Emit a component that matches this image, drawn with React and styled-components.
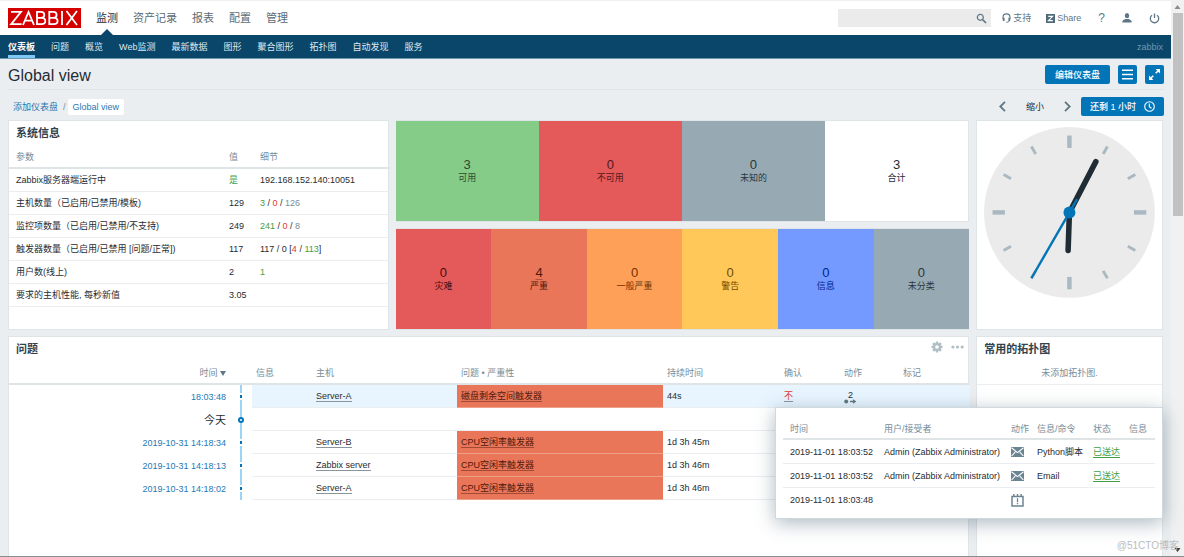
import React from "react";
import styled, { createGlobalStyle, css } from "styled-components";

const Global = createGlobalStyle`
  *, *::before, *::after { box-sizing: border-box; }
  body {
    margin: 0;
    background: #ebeef0;
    color: #1f2c33;
    font: 9px/12px "Liberation Sans", "Noto Sans CJK SC", sans-serif;
  }
  button, input { font: inherit; color: inherit; }
  h1, h2, ul { margin: 0; padding: 0; }
  ul { list-style: none; }
  a { color: inherit; text-decoration: none; }
  svg { display: block; flex: none; }
`;

const Shell = styled.div`
  display: flex;
  min-height: 100vh;
  border-bottom: 1px solid #8a8c8e;
`;

const Page = styled.div`
  flex: 1;
  min-width: 0;
  display: flex;
  flex-direction: column;
`;

const ScrollTrack = styled.div`
  width: 13px;
  background: #f1f1f1;
  display: flex;
  flex-direction: column;
  align-items: center;
  padding: 5px 1px 4px;
`;

const ScrollThumb = styled.div`
  width: 10px;
  height: 203px;
  margin-top: 4px;
  margin-bottom: auto;
  background: #c1c1c1;
`;

const TopBar = styled.header`
  display: flex;
  align-items: center;
  height: 35px;
  padding: 0 7px 0 8px;
  background: #fff;
  border-top: 1px solid #f0f0f0;
`;

const Logo = styled.a`
  display: flex;
  margin-right: 15px;
`;

const MainMenu = styled.ul`
  display: flex;
  gap: 15px;
  align-self: stretch;
  font-size: 11px;
  line-height: 34px;
  color: #5b6b75;
`;

const MainItem = styled.li`
  display: flex;
  flex-direction: column;
  align-items: center;
  ${(p) =>
    p.$active &&
    css`
      color: #1f2c33;
      &::after {
        content: "";
        margin-top: -6px;
        border: 6px solid transparent;
        border-top: 0;
        border-bottom-color: #0a466a;
      }
    `}
`;

const Tools = styled.div`
  display: flex;
  align-items: center;
  margin-left: auto;
  color: #5f7785;
`;

const SearchBox = styled.form`
  display: flex;
  align-items: center;
  width: 153px;
  height: 18px;
  margin-right: 11px;
  background: #ebebeb;
`;

const SearchInput = styled.input`
  flex: 1;
  min-width: 0;
  border: 0;
  padding: 0 6px;
  background: none;
  outline: none;
`;

const PlainButton = styled.button`
  display: flex;
  align-items: center;
  justify-content: center;
  border: 0;
  padding: 0 4px;
  background: none;
  cursor: pointer;
`;

const ToolLink = styled.a`
  display: flex;
  align-items: center;
  gap: 2px;
  margin-right: ${(p) => p.$gap || 15}px;
`;

const HelpMark = styled.span`
  font-size: 12px;
`;

const SubBar = styled.nav`
  display: flex;
  justify-content: space-between;
  align-items: stretch;
  height: 24px;
  padding: 0 8px;
  background: #0a466a;
  border-bottom: 1px solid #6f97b0;
  line-height: 24px;
  color: #6f97b0;
`;

const SubMenu = styled.ul`
  display: flex;
  gap: 16px;
  color: #dfe9ef;
`;

const SubItem = styled.li`
  ${(p) =>
    p.$active &&
    css`
      color: #fff;
      font-weight: 700;
      border-bottom: 3px solid #7dc8f5;
    `}
`;

const TitleRow = styled.div`
  display: flex;
  align-items: center;
  gap: 8px;
  height: 31px;
  margin: 0 7px 0 8px;
  padding-top: 1px;
  border-bottom: 1px solid #dfe4e7;
`;

const Title = styled.h1`
  margin-right: auto;
  padding-top: 2px;
  font-size: 16px;
  line-height: 20px;
  font-weight: 400;
`;

const BlueButton = styled.button`
  display: flex;
  align-items: center;
  justify-content: center;
  gap: 8px;
  height: 19px;
  min-width: 19px;
  padding: 0 ${(p) => p.$pad || 0}px;
  border: 0;
  border-radius: 2px;
  background: #0275b8;
  color: #fff;
  font-weight: 500;
  cursor: pointer;
`;

const FilterRow = styled.div`
  display: flex;
  align-items: center;
  height: 30px;
  padding: 3px 7px 0 13px;
`;

const Crumbs = styled.div`
  display: flex;
  align-items: center;
  gap: 5px;
  margin-right: auto;
  color: #1f78b4;
`;

const Slash = styled.span`
  color: #768d99;
`;

const CurrentCrumb = styled.a`
  margin-left: -3px;
  padding: 2px 5px;
  background: #fff;
  border-radius: 2px;
`;

const Period = styled.div`
  display: flex;
  align-items: center;
  gap: 12px;
  margin-right: 6px;
`;

const Dashboard = styled.main`
  position: relative;
  flex: 1;
  display: grid;
  grid-template-columns: 381fr 574fr 187fr;
  grid-template-rows: auto 1fr;
  gap: 6px 7px;
  margin: 0 8px;
`;

const Panel = styled.section`
  min-width: 0;
  min-height: 210px;
  background: #fff;
  border: 1px solid #dfe4e7;
  ${(p) => p.$wide && "grid-column: span 2;"}
  ${(p) => p.$open && "border-bottom: 0;"}
`;

const PanelHead = styled.div`
  display: flex;
  align-items: center;
  gap: 8px;
  height: 26px;
  padding: 0 4px 2px 7px;
`;

const PanelTitle = styled.h2`
  margin-right: auto;
  font-size: 11px;
  line-height: 16px;
  font-weight: 700;
  color: #31424c;
`;

const PanelTools = styled.div`
  display: flex;
  gap: 8px;
  height: 20px;
  align-self: flex-start;
  color: #b0bec5;
`;

const ToolButton = styled(PlainButton)`
  padding: 0;
`;

const Table = styled.table`
  width: 100%;
  table-layout: fixed;
  border-collapse: separate;
  border-spacing: 0;
  th, td {
    height: 23px;
    padding: 0 4px;
    text-align: left;
    white-space: nowrap;
    font-weight: 400;
    border-bottom: 1px solid #ebeef0;
  }
  th {
    height: 22px;
    color: #768d99;
    border-bottom: 2px solid #dfe4e7;
  }
`;

const SystemTable = styled(Table)`
  th:first-child, td:first-child { padding-left: 7px; }
`;

const ProblemTable = styled(Table)`
  th:first-child, td:first-child { text-align: right; }
  td:nth-child(-n + 2) { border-bottom: 0; }
`;

const ActionTable = styled(Table)`
  th { height: 21px; }
  td { height: 24px; }
  th:first-child, td:first-child { padding-left: 7px; }
  tr:last-child td { border-bottom: 0; }
`;

const ProblemRow = styled.tr`
  td:nth-child(n + 3) { background: ${(p) => (p.$hover ? "#e8f5ff" : "none")}; }
`;

const TimeCell = styled.td`
  color: #1f78b4;
`;

const DayCell = styled.td`
  font-size: 11px;
`;

const LineCell = styled.td`
  background: linear-gradient(#9bd4f5, #9bd4f5) center / 2px 100% no-repeat;
`;

const Dot = styled.span`
  display: block;
  width: 6px;
  height: 7px;
  margin: 0 auto;
  border: 2px solid #fff;
  background: #0275b8;
`;

const DayDot = styled.span`
  display: block;
  width: 6px;
  height: 6px;
  margin: 0 auto;
  border: 2px solid #0275b8;
  border-radius: 50%;
  background: #fff;
`;

const Severity = styled.td`
  &&& {
    background: #e97659;
    border-bottom-color: #efa08b;
    color: #52190b;
  }
`;

const Underlined = styled.a`
  border-bottom: 1px solid ${(p) => p.$line || "#8a969d"};
  color: ${(p) => p.$color || "inherit"};
`;

const Tone = styled.span`
  color: ${(p) => ({ green: "#429e47", red: "#e33734", grey: "#768d99" })[p.$tone]};
`;

const ActionButton = styled(PlainButton)`
  flex-direction: column;
  padding: 2px 0 0;
  line-height: 8px;
`;

const Middle = styled.div`
  display: grid;
  grid-template-rows: 1fr 1fr;
  gap: 6px;
`;

const Tiles = styled.section`
  display: flex;
  min-height: 102px;
  border: solid #dfe4e7;
  border-width: 1px ${(p) => (p.$edge ? 1 : 0)}px 1px 0;
  background: #fff;
`;

const Tile = styled.div`
  flex: 1;
  display: flex;
  flex-direction: column;
  align-items: center;
  justify-content: center;
  background: ${(p) => p.$bg};
  color: ${(p) => p.$fg};
`;

const Count = styled.span`
  font-size: 13px;
  line-height: 14px;
  ${(p) => p.$link && "text-decoration: underline 1px #b0503a; text-underline-offset: 2px;"}
`;

const ClockBox = styled.div`
  padding: 6px 7px;
  svg { width: 100%; height: auto; }
`;

const Empty = styled.p`
  margin: 0;
  height: 22px;
  line-height: 21px;
  text-align: center;
  color: #768d99;
  border-bottom: 1px solid #ebeef0;
`;

const Popup = styled.div`
  position: absolute;
  top: 287px;
  right: 0;
  width: 388px;
  padding: 11px 7px 6px;
  background: #fff;
  border: 1px solid #cfd8dd;
  box-shadow: 0 4px 18px rgba(50, 80, 100, 0.4);
`;

const Watermark = styled.div`
  position: absolute;
  right: 5px;
  bottom: 4px;
  font-size: 10px;
  line-height: 14px;
  color: #b9bcbe;
`;

const Cols = ({ widths }) => (
  <colgroup>
    {widths.map((w, i) => (
      <col key={i} style={{ width: w }} />
    ))}
  </colgroup>
);

const LogoMark = () => (
  <svg width="73" height="20" viewBox="0 0 73 20" role="img" aria-label="Zabbix">
    <rect width="73" height="20" fill="#d40000" />
    <g fill="none" stroke="#fff" strokeWidth="1.8">
      <path d="M3 3.9H13L3.2 16.1H13.6" />
      <path d="M15 17L20.5 4L26 17M17 12.7H24" />
      <path d="M29 3.9V16.1H33.5Q37.3 16.1 37.3 13Q37.3 9.9 33.5 9.9H29H33Q36.3 9.9 36.3 6.9Q36.3 3.9 33 3.9Z" />
      <path d="M41.3 3.9V16.1H45.8Q49.6 16.1 49.6 13Q49.6 9.9 45.8 9.9H41.3H45.3Q48.6 9.9 48.6 6.9Q48.6 3.9 45.3 3.9Z" />
      <path d="M54 3V17M58.5 3L69 17M69 3L58.5 17" />
    </g>
  </svg>
);

const SearchIcon = () => (
  <svg width="11" height="11" viewBox="0 0 11 11" fill="none" stroke="#5f7785">
    <circle cx="4.3" cy="4.3" r="3" strokeWidth="1.2" />
    <path d="M6.5 6.5L10 10" strokeWidth="1.7" />
  </svg>
);

const HeadsetIcon = () => (
  <svg width="9" height="10" viewBox="0 0 9 10" fill="none" stroke="currentColor">
    <path d="M1 6V4.4a3.5 3.5 0 0 1 7 0V6" strokeWidth="1.1" />
    <path d="M1.7 4.7V8M7.3 4.7V8" strokeWidth="1.8" />
    <path d="M7.6 7.5Q7 9.4 4.4 9.3" />
  </svg>
);

const ShareIcon = () => (
  <svg width="9" height="9" viewBox="0 0 9 9">
    <rect width="9" height="9" fill="#4f6b7a" />
    <path d="M2.2 2.3H6.5L2.5 6.7H6.9" fill="none" stroke="#fff" strokeWidth="1.2" />
  </svg>
);

const UserIcon = () => (
  <svg width="10" height="10" viewBox="0 0 10 10" fill="currentColor">
    <ellipse cx="5" cy="2.7" rx="2.2" ry="2.6" />
    <path d="M0.5 9.6V8.2Q0.7 6.9 3.5 6.1H6.5Q9.3 6.9 9.5 8.2V9.6Z" />
  </svg>
);

const PowerIcon = () => (
  <svg width="11" height="11" viewBox="0 0 11 11" fill="none" stroke="currentColor" strokeWidth="1.3">
    <path d="M3 2.2A4.2 4.2 0 1 0 8 2.2M5.5 0.5V5" />
  </svg>
);

const MenuIcon = () => (
  <svg width="11" height="11" viewBox="0 0 11 11" stroke="#fff" strokeWidth="1.6">
    <path d="M0 1.3H11M0 5.5H11M0 9.7H11" />
  </svg>
);

const ExpandIcon = () => (
  <svg width="11" height="11" viewBox="0 0 11 11" fill="#fff" stroke="#fff">
    <path d="M6.6 0H11V4.4ZM0 6.6V11H4.4Z" stroke="none" />
    <path d="M9 2L6.7 4.3M2 9L4.3 6.7" strokeWidth="1.6" />
  </svg>
);

const Chevron = ({ right }) => (
  <svg width="7" height="11" viewBox="0 0 7 11" fill="none" stroke="#5f7785" strokeWidth="1.8">
    <path d={right ? "M1 0.9L5.7 5.5L1 10.1" : "M6 0.9L1.3 5.5L6 10.1"} />
  </svg>
);

const ClockIcon = () => (
  <svg width="11" height="11" viewBox="0 0 11 11" fill="none" stroke="#fff" strokeWidth="1.1">
    <circle cx="5.5" cy="5.5" r="4.8" />
    <path d="M5.3 2.5V5.6L7.5 7.2" />
  </svg>
);

const GearIcon = () => (
  <svg width="12" height="12" viewBox="-6 -6 12 12" fill="currentColor">
    {[0, 45, 90, 135].map((a) => (
      <rect key={a} x="-1.2" y="-5.5" width="2.4" height="11" transform={`rotate(${a})`} />
    ))}
    <circle r="4" />
    <circle r="1.8" fill="#fff" />
  </svg>
);

const MoreIcon = () => (
  <svg width="13" height="4" viewBox="0 0 13 4" fill="currentColor">
    <circle cx="1.9" cy="2" r="1.6" />
    <circle cx="6.5" cy="2" r="1.6" />
    <circle cx="11.1" cy="2" r="1.6" />
  </svg>
);

const SortMark = styled.svg`
  display: inline-block;
`;

const SortIcon = () => (
  <SortMark width="6" height="5" viewBox="0 0 6 5" fill="#5f7785">
    <path d="M0 0H6L3 5Z" />
  </SortMark>
);

const ActionIcon = () => (
  <svg width="13" height="5" viewBox="0 0 13 5" fill="#5f7785">
    <circle cx="2.2" cy="2.5" r="2" />
    <path d="M6 1.7H9V0.2L12.4 2.5L9 4.8V3.3H6Z" />
  </svg>
);

const MailIcon = () => (
  <svg width="13" height="10" viewBox="0 0 13 10">
    <rect width="13" height="10" fill="#6b8493" />
    <path d="M0.5 0.8L6.5 5.6L12.5 0.8M0.7 9L4.3 4.8M12.3 9L8.7 4.8" fill="none" stroke="#fff" strokeWidth="1.1" />
  </svg>
);

const EventIcon = () => (
  <svg width="13" height="13" viewBox="0 0 13 13" fill="none" stroke="#6b8493">
    <path d="M1 2.4V12H12V2.4Z" strokeWidth="1.5" />
    <path d="M2.8 0V2.6M6.5 0V2.6M10.2 0V2.6" strokeWidth="1.4" />
    <path d="M6.5 4.2V8M6.5 8.8V10.2" strokeWidth="1.3" />
  </svg>
);

const Arrow = ({ down }) => (
  <svg width="7" height="4" viewBox="0 0 7 4" fill={down ? "#404040" : "#8c8c8c"}>
    <path d={down ? "M0.5 0H6.5L3.5 4Z" : "M0.5 4H6.5L3.5 0Z"} />
  </svg>
);

const ClockFace = () => (
  <svg width="171" height="171" viewBox="-100 -100 200 200" role="img" aria-label="clock">
    <circle r="100" fill="#ebebeb" />
    {Array.from({ length: 12 }, (_, i) => (
      <rect
        key={i}
        x={i % 3 ? -1.7 : -2.6}
        y={i % 3 ? -89 : -90}
        width={i % 3 ? 3.4 : 5.2}
        height={i % 3 ? 10 : 14.5}
        fill="#aab9c1"
        transform={`rotate(${i * 30})`}
      />
    ))}
    <g fill="none" strokeLinecap="round">
      <path d="M0 0V-67" stroke="#1f2c33" strokeWidth="6.5" transform="rotate(27.5)" />
      <path d="M0 0V-44.5" stroke="#1f2c33" strokeWidth="6.5" transform="rotate(182)" />
      <path d="M0 18V-89" stroke="#0275b8" strokeWidth="2.8" strokeLinecap="butt" transform="rotate(210)" />
    </g>
    <circle r="7" fill="#0275b8" />
  </svg>
);

const hostTiles = [
  ["3", "可用", "#86cc89", "#2b4a2d"],
  ["0", "不可用", "#e45959", "#52191b"],
  ["0", "未知的", "#97aab3", "#2a363c"],
  ["3", "合计", "#ffffff", "#1f2c33"],
];

const severityTiles = [
  ["0", "灾难", "#e45959", "#4b0c0c"],
  ["4", "严重", "#e97659", "#52190b"],
  ["0", "一般严重", "#ffa059", "#733100"],
  ["0", "警告", "#ffc859", "#734d00"],
  ["0", "信息", "#7499ff", "#00268e"],
  ["0", "未分类", "#97aab3", "#2a363c"],
];

const T = (tone, text) => <Tone $tone={tone}>{text}</Tone>;

const systemRows = [
  ["Zabbix服务器端运行中", T("green", "是"), "192.168.152.140:10051"],
  ["主机数量（已启用/已禁用/模板)", "129", <>{T("green", "3")} / {T("red", "0")} / {T("grey", "126")}</>],
  ["监控项数量（已启用/已禁用/不支持)", "249", <>{T("green", "241")} / {T("red", "0")} / {T("grey", "8")}</>],
  ["触发器数量（已启用/已禁用 [问题/正常])", "117", <>117 / 0 [{T("red", "4")} / {T("green", "113")}]</>],
  ["用户数(线上)", "2", T("green", "1")],
  ["要求的主机性能, 每秒新值", "3.05", ""],
];

const problems = [
  { time: "18:03:48", host: "Server-A", name: "磁盘剩余空间触发器", age: "44s", hover: true },
  { day: "今天" },
  { time: "2019-10-31 14:18:34", host: "Server-B", name: "CPU空闲率触发器", age: "1d 3h 45m" },
  { time: "2019-10-31 14:18:13", host: "Zabbix server", name: "CPU空闲率触发器", age: "1d 3h 46m" },
  { time: "2019-10-31 14:18:02", host: "Server-A", name: "CPU空闲率触发器", age: "1d 3h 46m" },
];

const actions = [
  ["2019-11-01 18:03:52", "Admin (Zabbix Administrator)", <MailIcon />, "Python脚本", "已送达"],
  ["2019-11-01 18:03:52", "Admin (Zabbix Administrator)", <MailIcon />, "Email", "已送达"],
  ["2019-11-01 18:03:48", "", <EventIcon />, "", ""],
];

const TileRow = ({ tiles, edge }) => (
  <Tiles $edge={edge}>
    {tiles.map(([count, label, bg, fg]) => (
      <Tile key={label} $bg={bg} $fg={fg}>
        <Count $link={count === "4"}>{count}</Count>
        <span>{label}</span>
      </Tile>
    ))}
  </Tiles>
);

const HeadRow = ({ labels }) => (
  <thead>
    <tr>
      {labels.map((l, i) => (
        <th key={i} scope="col">{l}</th>
      ))}
    </tr>
  </thead>
);

export default function App() {
  return (
    <Shell>
      <Global />
      <Page>
        <TopBar>
          <Logo href="#"><LogoMark /></Logo>
          <MainMenu>
            {["监测", "资产记录", "报表", "配置", "管理"].map((m, i) => (
              <MainItem key={m} $active={i === 0}><a href="#">{m}</a></MainItem>
            ))}
          </MainMenu>
          <Tools>
            <SearchBox>
              <SearchInput type="search" aria-label="搜索" />
              <PlainButton type="button" aria-label="搜索"><SearchIcon /></PlainButton>
            </SearchBox>
            <ToolLink href="#"><HeadsetIcon />支持</ToolLink>
            <ToolLink href="#" $gap={17}><ShareIcon />Share</ToolLink>
            <ToolLink href="#" $gap={17}><HelpMark>?</HelpMark></ToolLink>
            <ToolLink href="#" $gap={13} aria-label="用户"><UserIcon /></ToolLink>
            <PlainButton type="button" aria-label="退出"><PowerIcon /></PlainButton>
          </Tools>
        </TopBar>
        <SubBar>
          <SubMenu>
            {["仪表板", "问题", "概览", "Web监测", "最新数据", "图形", "聚合图形", "拓扑图", "自动发现", "服务"].map((m, i) => (
              <SubItem key={m} $active={i === 0}><a href="#">{m}</a></SubItem>
            ))}
          </SubMenu>
          <span>zabbix</span>
        </SubBar>
        <TitleRow>
          <Title>Global view</Title>
          <BlueButton $pad={10}>编辑仪表盘</BlueButton>
          <BlueButton aria-label="菜单"><MenuIcon /></BlueButton>
          <BlueButton aria-label="全屏"><ExpandIcon /></BlueButton>
        </TitleRow>
        <FilterRow>
          <Crumbs>
            <a href="#">添加仪表盘</a>
            <Slash>/</Slash>
            <CurrentCrumb href="#">Global view</CurrentCrumb>
          </Crumbs>
          <Period>
            <PlainButton aria-label="上一个"><Chevron /></PlainButton>
            <PlainButton>缩小</PlainButton>
            <PlainButton aria-label="下一个"><Chevron right /></PlainButton>
          </Period>
          <BlueButton $pad={9}>还剩 1 小时<ClockIcon /></BlueButton>
        </FilterRow>
        <Dashboard>
          <Panel>
            <PanelHead><PanelTitle>系统信息</PanelTitle></PanelHead>
            <SystemTable>
              <Cols widths={[216, 31, 134]} />
              <HeadRow labels={["参数", "值", "细节"]} />
              <tbody>
                {systemRows.map(([name, value, detail]) => (
                  <tr key={name}>
                    <td>{name}</td>
                    <td>{value}</td>
                    <td>{detail}</td>
                  </tr>
                ))}
              </tbody>
            </SystemTable>
          </Panel>
          <Middle>
            <TileRow tiles={hostTiles} edge />
            <TileRow tiles={severityTiles} />
          </Middle>
          <Panel>
            <ClockBox><ClockFace /></ClockBox>
          </Panel>
          <Panel $wide $open>
            <PanelHead>
              <PanelTitle>问题</PanelTitle>
              <PanelTools>
                <ToolButton aria-label="设置"><GearIcon /></ToolButton>
                <ToolButton aria-label="更多"><MoreIcon /></ToolButton>
              </PanelTools>
            </PanelHead>
            <ProblemTable>
              <Cols widths={[221, 22, 60, 145, 206, 117, 60, 59, 71]} />
              <HeadRow labels={[<>时间 <SortIcon /></>, "", "信息", "主机", "问题 • 严重性", "持续时间", "确认", "动作", "标记"]} />
              <tbody>
                {problems.map((p, i) =>
                  p.day ? (
                    <ProblemRow key={i}>
                      <DayCell>{p.day}</DayCell>
                      <LineCell><DayDot /></LineCell>
                      <td colSpan={7} />
                    </ProblemRow>
                  ) : (
                    <ProblemRow key={i} $hover={p.hover}>
                      <TimeCell><a href="#">{p.time}</a></TimeCell>
                      <LineCell><Dot /></LineCell>
                      <td />
                      <td><Underlined href="#">{p.host}</Underlined></td>
                      <Severity><Underlined href="#" $line="#a14a35">{p.name}</Underlined></Severity>
                      <td>{p.age}</td>
                      <td>{p.hover && <Underlined href="#" $color="#e33734">不</Underlined>}</td>
                      <td>{p.hover && <ActionButton>2<ActionIcon /></ActionButton>}</td>
                      <td />
                    </ProblemRow>
                  )
                )}
              </tbody>
            </ProblemTable>
          </Panel>
          <Panel $open>
            <PanelHead><PanelTitle>常用的拓扑图</PanelTitle></PanelHead>
            <Empty>未添加拓扑图.</Empty>
          </Panel>
          <Popup>
            <ActionTable>
              <Cols widths={[97, 127, 26, 56, 36, 30]} />
              <HeadRow labels={["时间", "用户/接受者", "动作", "信息/命令", "状态", "信息"]} />
              <tbody>
                {actions.map(([time, user, icon, message, status], i) => (
                  <tr key={i}>
                    <td>{time}</td>
                    <td>{user}</td>
                    <td>{icon}</td>
                    <td>{message}</td>
                    <td>{status && <Underlined href="#" $color="#429e47" $line="#429e47">{status}</Underlined>}</td>
                    <td />
                  </tr>
                ))}
              </tbody>
            </ActionTable>
          </Popup>
        </Dashboard>
      </Page>
      <ScrollTrack>
        <Arrow />
        <ScrollThumb />
        <Arrow down />
      </ScrollTrack>
      <Watermark>@51CTO博客</Watermark>
    </Shell>
  );
}
